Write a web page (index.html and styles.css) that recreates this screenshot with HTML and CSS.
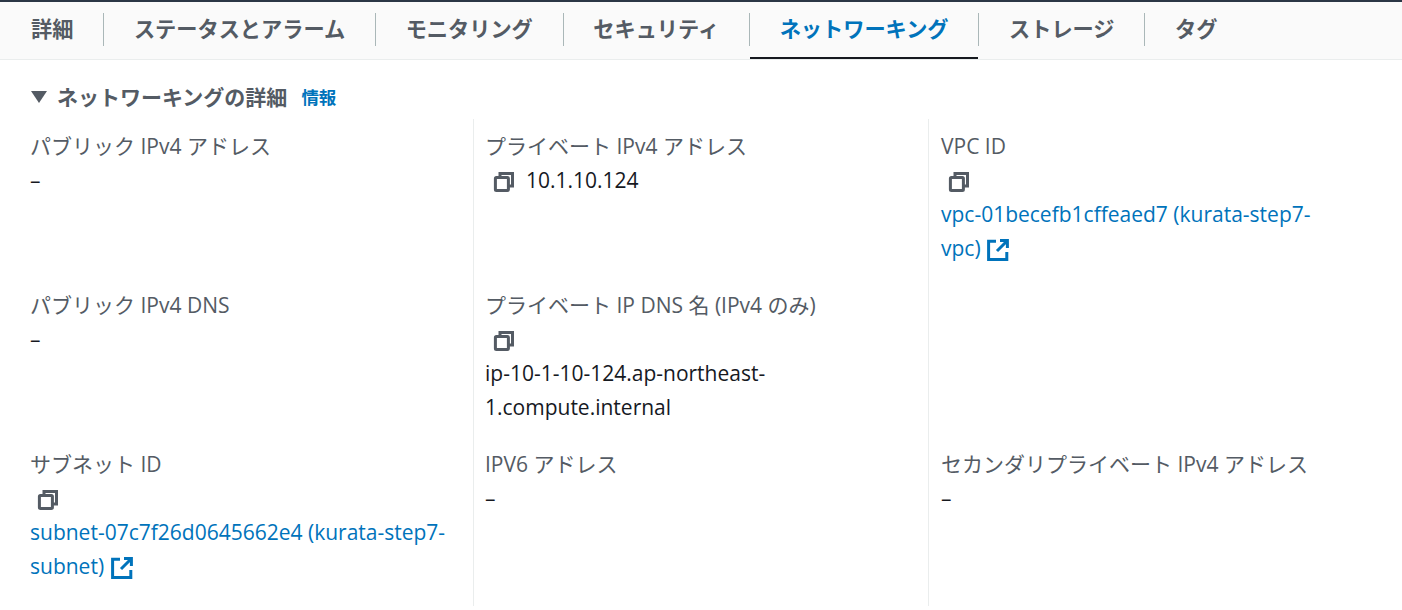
FILE: index.html
```html
<!DOCTYPE html>
<html lang="ja">
<head>
    <meta charset="UTF-8">
    <title>ネットワーキングの詳細</title>
    <link rel="stylesheet" href="styles.css">
</head>
<body>
    <svg class="icon-defs" width="0" height="0">
        <symbol id="copy" viewBox="0 0 22 22">
            <path d="M7 6V2.5h12.5V15H16" fill="none" stroke="currentColor" stroke-width="3"/>
            <rect x="2.4" y="6.4" width="13" height="13" rx="1" fill="none" stroke="currentColor" stroke-width="3"/>
        </symbol>
        <symbol id="external" viewBox="0 0 22 22">
            <path d="M9 2.2H1.6v18.2h18.2V13" fill="none" stroke="currentColor" stroke-width="3"/>
            <path d="M13 1.6h7.4V9M20 2l-10 10" fill="none" stroke="currentColor" stroke-width="3"/>
        </symbol>
    </svg>

    <nav class="tabs">
        <a class="tab">詳細</a>
        <a class="tab">ステータスとアラーム</a>
        <a class="tab">モニタリング</a>
        <a class="tab">セキュリティ</a>
        <a class="tab active">ネットワーキング</a>
        <a class="tab">ストレージ</a>
        <a class="tab">タグ</a>
    </nav>

    <h2 class="section-title">
        <span class="caret"></span>ネットワーキングの詳細<a class="info">情報</a>
    </h2>

    <div class="details">
        <div class="col">
            <div class="item">
                <div class="label">パブリック IPv4 アドレス</div>
                <div class="value">–</div>
            </div>
            <div class="item">
                <div class="label">パブリック IPv4 DNS</div>
                <div class="value">–</div>
            </div>
            <div class="item">
                <div class="label">サブネット ID</div>
                <div class="value"><svg class="copy"><use href="#copy"/></svg></div>
                <div class="value"><a class="link">subnet-07c7f26d0645662e4 (kurata-step7-subnet) <svg class="ext"><use href="#external"/></svg></a></div>
            </div>
        </div>
        <div class="col">
            <div class="item">
                <div class="label">プライベート IPv4 アドレス</div>
                <div class="value"><svg class="copy"><use href="#copy"/></svg><span class="copy-text">10.1.10.124</span></div>
            </div>
            <div class="item">
                <div class="label">プライベート IP DNS 名 (IPv4 のみ)</div>
                <div class="value"><svg class="copy"><use href="#copy"/></svg></div>
                <div class="value">ip-10-1-10-124.ap-northeast-1.compute.internal</div>
            </div>
            <div class="item">
                <div class="label">IPV6 アドレス</div>
                <div class="value">–</div>
            </div>
        </div>
        <div class="col">
            <div class="item">
                <div class="label">VPC ID</div>
                <div class="value"><svg class="copy"><use href="#copy"/></svg></div>
                <div class="value"><a class="link">vpc-01becefb1cffeaed7 (kurata-step7-vpc) <svg class="ext"><use href="#external"/></svg></a></div>
            </div>
            <div class="item"></div>
            <div class="item">
                <div class="label">セカンダリプライベート IPv4 アドレス</div>
                <div class="value">–</div>
            </div>
        </div>
    </div>
</body>
</html>
```

FILE: styles.css
```css
body {
    font-family: "Open Sans", "Noto Sans CJK JP", sans-serif;
    font-size: 21px;
    line-height: 34px;
    color: #16191f;
    background-color: #fff;
    margin: 0;
    height: 610px;
    overflow: hidden;
}
a {
    text-decoration: none;
}
.icon-defs {
    display: block;
}
.tabs {
    display: flex;
    height: 57px;
    background-color: #fafafa;
    border-top: 2px solid #2b3645;
    border-bottom: 1px solid #eaeded;
}
.tab {
    display: block;
    position: relative;
    height: 33px;
    margin-top: 11px;
    padding: 0 29.75px;
    border-left: 1px solid #aab7b8;
    font-weight: 700;
    font-size: 21.2px;
    line-height: 32px;
    color: #545b64;
}
.tab:first-child {
    border-left: none;
    padding-left: 31px;
}
.tab.active {
    color: #0073bb;
}
.tab.active::after {
    content: "";
    position: absolute;
    left: 0;
    right: 0;
    top: 44px;
    height: 2px;
    background-color: #16191f;
}
.section-title {
    display: flex;
    align-items: center;
    margin: 20px 0 0 31px;
    height: 34px;
    font-size: 21px;
    font-weight: 700;
    color: #545b64;
}
.caret {
    width: 0;
    height: 0;
    margin-right: 10px;
    border-left: 8px solid transparent;
    border-right: 8px solid transparent;
    border-top: 12px solid #545b64;
}
.info {
    margin-left: 14px;
    font-size: 17.5px;
    color: #0073bb;
}
.details {
    display: grid;
    grid-template-columns: 473px 455px 1fr;
    margin-top: 5px;
}
.col {
    border-left: 1px solid #eaeded;
    padding: 10px 84px 0 11px;
}
.col:first-child {
    border-left: none;
    padding-left: 30px;
    padding-right: 25px;
}
.col:last-child {
    padding-left: 12px;
    padding-right: 90px;
}
.item {
    height: 159px;
}
.label {
    color: #545b64;
}
.value {
    min-height: 34px;
}
.copy {
    display: inline-block;
    width: 22px;
    height: 22px;
    margin-left: 7px;
    vertical-align: -5px;
    color: #545b64;
}
.col:nth-child(2) .copy {
    margin-left: 8px;
}
.copy-text {
    margin-left: 11px;
}
.link {
    color: #0073bb;
}
.ext {
    display: inline-block;
    width: 22px;
    height: 22px;
    margin-left: 1px;
    vertical-align: -5px;
    color: #0073bb;
}
```
